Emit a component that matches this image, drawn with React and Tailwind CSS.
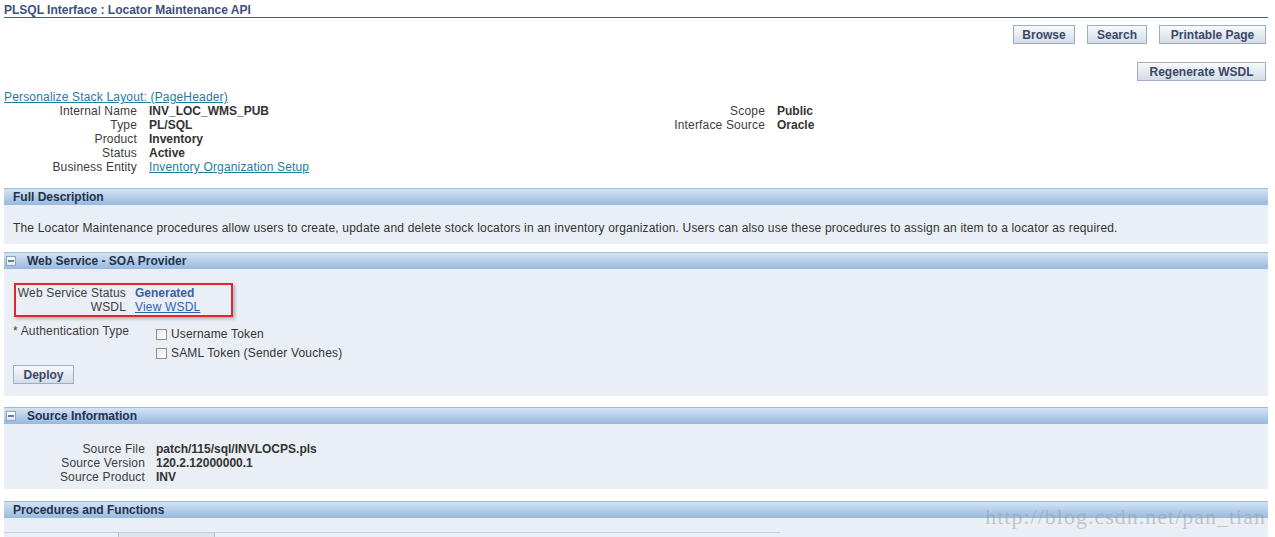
import React from "react";

function Btn({ children, className = "" }) {
  return (
    <button className={`h-[19px] px-0 border border-[#9fadc1] bg-gradient-to-b from-[#f8fafc] to-[#d3dce7] text-[12px] font-bold text-[#3a4866] leading-none tracking-normal ${className}`}>
      {children}
    </button>
  );
}

function Minus() {
  return (
    <span className="w-[10px] h-[10px] border border-[#8ea3bf] bg-gradient-to-b from-[#ffffff] to-[#dfe6ef] flex items-center justify-center">
      <span className="w-[6px] h-[2px] bg-[#6b7d96]" />
    </span>
  );
}

function Header({ title, toggle }) {
  return (
    <div className={`h-[17px] border-t border-[#a3bad6] bg-gradient-to-b from-[#d4e3f3] to-[#97b9de] flex items-center ${toggle ? "pl-[2px] gap-[11px]" : "pl-[9px]"}`}>
      {toggle && <Minus />}
      <span className="font-bold text-[#23324f] text-[12px] leading-none tracking-normal">{title}</span>
    </div>
  );
}

function Box() {
  return <span className="w-[11px] h-[11px] border border-[#8f8f8f] bg-gradient-to-br from-[#e9e9e9] to-[#ffffff]" />;
}

export default function App() {
  const info = [
    ["Internal Name", "INV_LOC_WMS_PUB"],
    ["Type", "PL/SQL"],
    ["Product", "Inventory"],
    ["Status", "Active"],
  ];
  const source = [
    ["Source File", "patch/115/sql/INVLOCPS.pls"],
    ["Source Version", "120.2.12000000.1"],
    ["Source Product", "INV"],
  ];

  return (
    <div className="w-[1275px] h-[537px] overflow-hidden bg-white font-['Liberation_Sans',Arial,sans-serif] text-[12px] text-[#333] tracking-[0.17px]">
      <div className="ml-[4px] mr-[7px] pt-[3px]">
        {/* page title */}
        <div className="h-[15px] leading-[15px] border-b border-[#3f5f92] font-bold text-[#3b5080] tracking-normal">
          PLSQL Interface : Locator Maintenance API
        </div>

        <div className="mt-[7px] flex justify-end gap-[12px] pr-[2px]">
          <Btn className="w-[62px]">Browse</Btn>
          <Btn className="w-[60px]">Search</Btn>
          <Btn className="w-[107px]">Printable Page</Btn>
        </div>
        <div className="mt-[18px] flex justify-end pr-[2px]">
          <Btn className="w-[129px]">Regenerate WSDL</Btn>
        </div>

        <div className="mt-[9px] leading-[14px]">
          <a className="text-[#1f7c9c] underline">Personalize Stack Layout: (PageHeader)</a>
        </div>
        <div className="flex leading-[14px] pb-[1px]">
          <div className="w-[500px] grid grid-cols-[133px_auto] gap-x-[12px]">
            {info.map(([l, v]) => (
              <React.Fragment key={l}>
                <span className="text-right text-[#3c3c3c]">{l}</span>
                <span className="font-bold tracking-normal">{v}</span>
              </React.Fragment>
            ))}
            <span className="text-right text-[#3c3c3c]">Business Entity</span>
            <a className="text-[#1f7c9c] underline">Inventory Organization Setup</a>
          </div>
          <div className="grid grid-cols-[261px_auto] gap-x-[12px] content-start">
            <span className="text-right text-[#3c3c3c]">Scope</span>
            <span className="font-bold tracking-normal">Public</span>
            <span className="text-right text-[#3c3c3c]">Interface Source</span>
            <span className="font-bold tracking-normal">Oracle</span>
          </div>
        </div>

        {/* Full Description */}
        <div className="mt-[13px]">
          <Header title="Full Description" />
          <div className="h-[39px] bg-[#eaeef5] pt-[16px] pl-[9px] leading-[14px]">
            The Locator Maintenance procedures allow users to create, update and delete stock locators in an inventory organization. Users can also use these procedures to assign an item to a locator as required.
          </div>
        </div>

        {/* Web Service */}
        <div className="mt-[8px]">
          <Header title="Web Service - SOA Provider" toggle />
          <div className="h-[127px] bg-[#eaeef5] pt-[14px] leading-[14px]">
            <div className="ml-[10px] w-[219px] border-2 border-[#e3262b] pt-[1px] pb-[1px] shadow-[2px_2px_3px_rgba(0,0,0,0.25)] grid grid-cols-[110px_auto] gap-x-[9px]">
              <span className="text-right text-[#3c3c3c]">Web Service Status</span>
              <span className="font-bold text-[#3a5ea6] tracking-normal">Generated</span>
              <span className="text-right text-[#3c3c3c]">WSDL</span>
              <a className="text-[#2a66ad] underline">View WSDL</a>
            </div>
            <div className="mt-[7px] flex pl-[9px]">
              <span className="w-[143px] text-[#3c3c3c]">* Authentication Type</span>
              <div className="pt-[3px] flex flex-col gap-[5px]">
                <label className="h-[14px] flex items-center gap-[4px]">
                  <Box />
                  <span>Username Token</span>
                </label>
                <label className="h-[14px] flex items-center gap-[4px]">
                  <Box />
                  <span>SAML Token (Sender Vouches)</span>
                </label>
              </div>
            </div>
            <div className="mt-[5px] pl-[9px]">
              <Btn className="w-[61px]">Deploy</Btn>
            </div>
          </div>
        </div>

        {/* Source Information */}
        <div className="mt-[11px]">
          <Header title="Source Information" toggle />
          <div className="h-[65px] bg-[#eaeef5] pt-[18px] leading-[14px] grid grid-cols-[141px_auto] gap-x-[11px] content-start">
            {source.map(([l, v]) => (
              <React.Fragment key={l}>
                <span className="text-right text-[#3c3c3c]">{l}</span>
                <span className="font-bold tracking-normal">{v}</span>
              </React.Fragment>
            ))}
          </div>
        </div>

        {/* Procedures and Functions */}
        <div className="mt-[12px] relative">
          <Header title="Procedures and Functions" />
          <div className="h-[40px] bg-[#eaeef5] pt-[14px]">
            <div className="w-[776px] border-t border-[#c9cfd8] flex">
              <div className="ml-[114px] w-[97px] h-[8px] border-l border-r border-[#b7bec9] bg-[#dfe4ec]" />
            </div>
          </div>
          <span className="absolute right-[2px] top-[3px] font-['Liberation_Serif',serif] text-[22px] tracking-[1px] text-[#9a9a9a]/50 leading-[26px]">
            http://blog.csdn.net/pan_tian
          </span>
        </div>
      </div>
    </div>
  );
}
